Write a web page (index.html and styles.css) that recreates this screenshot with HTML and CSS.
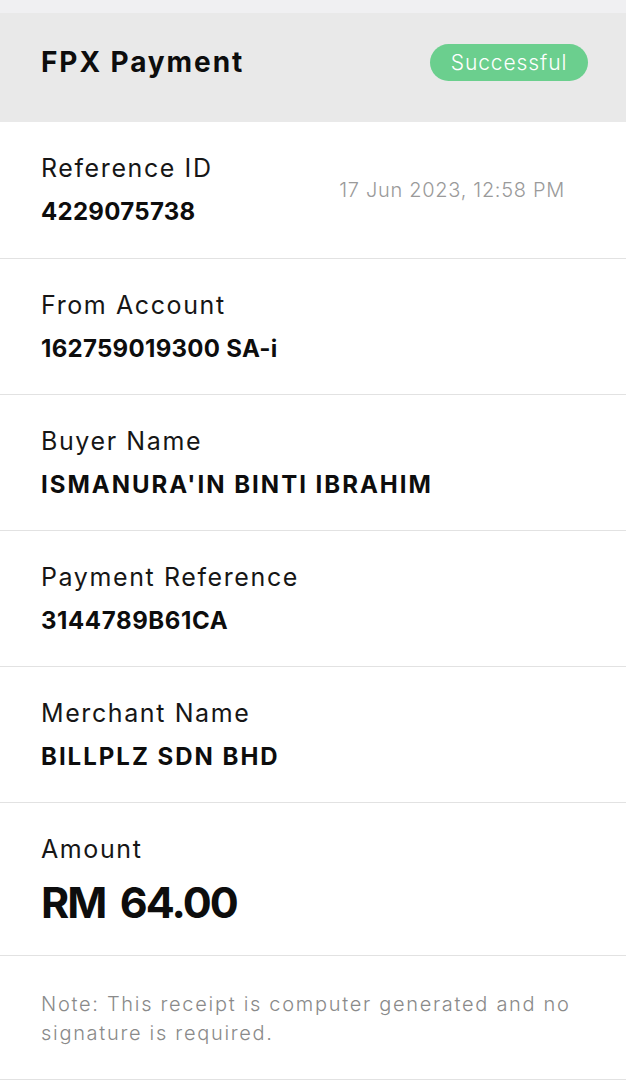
FILE: index.html
```html
<!DOCTYPE html>
<html lang="en">
<head>
<meta charset="utf-8">
<title>FPX Payment</title>
<link rel="stylesheet" href="styles.css">
</head>
<body>
<div class="top-strip"></div>
<header class="header">
  <h1 class="title">FPX Payment</h1>
  <span class="badge">Successful</span>
</header>
<main class="receipt">
  <section class="row row-split">
    <div class="info">
      <div class="label">Reference ID</div>
      <div class="value">4229075738</div>
    </div>
    <div class="date">17 Jun 2023, 12:58 PM</div>
  </section>
  <section class="row">
    <div class="label">From Account</div>
    <div class="value">162759019300 SA-i</div>
  </section>
  <section class="row">
    <div class="label">Buyer Name</div>
    <div class="value value-wide">ISMANURA'IN BINTI IBRAHIM</div>
  </section>
  <section class="row">
    <div class="label">Payment Reference</div>
    <div class="value value-mid">3144789B61CA</div>
  </section>
  <section class="row">
    <div class="label">Merchant Name</div>
    <div class="value value-wide">BILLPLZ SDN BHD</div>
  </section>
  <section class="row row-amount">
    <div class="label">Amount</div>
    <div class="value amount">RM 64.00</div>
  </section>
  <section class="note">
    Note: This receipt is computer generated and no signature is required.
  </section>
</main>
</body>
</html>
```
FILE: styles.css
```css
* { box-sizing: border-box; }
html, body { margin: 0; padding: 0; }
body {
  background: #ffffff;
  font-family: Inter, "Open Sans", sans-serif;
  color: #111111;
  width: 626px;
}
.top-strip {
  height: 13px;
  background: #f0f0f2;
}
.header {
  background: #e9e9e9;
  display: flex;
  align-items: center;
  justify-content: space-between;
  padding: 31px 38px 41px 41px;
}
.title {
  margin: 0;
  font-size: 28px;
  font-weight: 700;
  line-height: 37px;
  color: #0d0d0d;
  letter-spacing: 1.9px;
}
.badge {
  display: inline-flex;
  align-items: center;
  justify-content: center;
  width: 158px;
  height: 37px;
  border-radius: 19px;
  background: #6bcf8e;
  color: #ffffff;
  font-size: 21px;
  font-weight: 300;
  letter-spacing: 0.9px;
}
.row {
  display: flex;
  flex-direction: column;
  gap: 12px;
  padding: 30px 41px 29px 41px;
  border-bottom: 1px solid #e2e2e2;
}
.row-split {
  flex-direction: row;
  align-items: center;
  justify-content: space-between;
  padding-right: 61px;
  padding-bottom: 30px;
}
.info {
  display: flex;
  flex-direction: column;
  gap: 12px;
}
.label {
  font-size: 25px;
  line-height: 32px;
  font-weight: 400;
  color: #161616;
  letter-spacing: 1.6px;
}
.value {
  font-size: 24px;
  line-height: 32px;
  font-weight: 700;
  color: #0d0d0d;
  letter-spacing: 0.3px;
}
.value-mid {
  letter-spacing: 0.6px;
}
.value-wide {
  letter-spacing: 2px;
}
.date {
  font-size: 20px;
  font-weight: 300;
  color: #9a9a9a;
  letter-spacing: 0.7px;
}
.row-amount {
  gap: 13px;
}
.value.amount {
  font-size: 43px;
  line-height: 48px;
  letter-spacing: -1.9px;
  word-spacing: 6px;
}
.note {
  padding: 34px 41px 31px 41px;
  font-size: 20px;
  line-height: 29px;
  font-weight: 300;
  color: #8a8a8a;
  letter-spacing: 1.7px;
  border-bottom: 1px solid #e2e2e2;
}
```
